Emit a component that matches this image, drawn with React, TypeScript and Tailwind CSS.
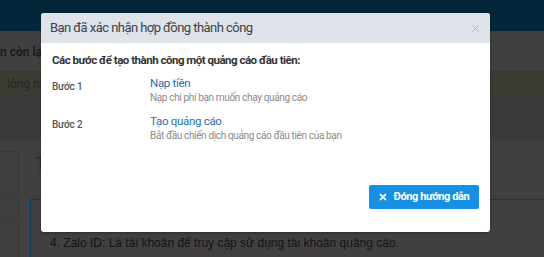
import { FaTimes } from "react-icons/fa";
import { X } from "lucide-react";

const steps = [
  { label: "Bước 1", title: "Nạp tiền", desc: "Nạp chi phí bạn muốn chạy quảng cáo" },
  { label: "Bước 2", title: "Tạo quảng cáo", desc: "Bắt đầu chiến dịch quảng cáo đầu tiên của bạn" },
];

export default function App() {
  return (
    <div className="relative w-[544px] h-[257px] overflow-hidden bg-[#404040] font-['Roboto',sans-serif]">
      {/* page behind the backdrop */}
      <div className="h-[31px] bg-[#04263a]" />
      <div className="h-[40px] flex items-center pt-[2px] text-[12px] font-bold text-[#1a1a1a]">n còn lại:</div>
      <div className="h-[25px] flex items-center pl-[7px] bg-[#3c3b34] border-y border-[#383833] text-[12px] text-[#262626]">
        lòng nạp
      </div>
      <div className="h-[43px] bg-[#3a3a3a]" />
      <div className="flex">
        <div className="w-[19px] h-[120px] mt-[12px] border-r border-t border-[#383838] bg-[#3e3e3e] flex flex-col">
          <div className="h-[41px] border-b border-[#393939]" />
          <div className="h-[31px] border-b border-[#393939]" />
        </div>
        <div className="flex-1 pl-[11px]">
          <div className="h-[60px] pt-[16px] pl-[5px] text-[18px] leading-none text-[#15354d] font-['Liberation_Sans',sans-serif]">
            T
          </div>
          <div className="border-l border-t border-[#0d3a56] h-[80px] pl-[19px] pt-[34px] text-[12px] text-[#141414] font-['Liberation_Sans',sans-serif]">
            4. Zalo ID: Là tài khoản để truy cập sử dụng tài khoản quảng cáo.
          </div>
        </div>
      </div>

      {/* modal */}
      <div className="absolute left-[41px] top-[13px] w-[449px] h-[219px] rounded-[3px] bg-white overflow-hidden shadow-[0_1px_3px_rgba(0,0,0,0.3)] flex flex-col">
        <div className="h-[30px] shrink-0 bg-[#dee2e9] flex items-center justify-between pl-[9px] pr-[9px]">
          <span className="text-[13px] tracking-[-0.55px] text-[#3d4247]">Bạn đã xác nhận hợp đồng thành công</span>
          <X className="w-[11px] h-[11px] text-[#a6aeb6]" strokeWidth={2} />
        </div>
        <div className="flex-1 flex flex-col px-[11px] pt-[10px]">
          <div className="text-[11.5px] tracking-[-0.5px] font-bold text-[#333] leading-[14px]">
            Các bước để tạo thành công một quảng cáo đầu tiên:
          </div>
          <div className="flex flex-col gap-[8px] mt-[8px]">
            {steps.map((s) => (
              <div key={s.label} className="flex">
                <div className="w-[98px] pt-[4px] text-[10px] tracking-[-0.2px] font-medium text-[#555]">{s.label}</div>
                <div className="flex flex-col">
                  <span className="text-[11.5px] tracking-[-0.3px] text-[#1d6fb0] leading-[16px]">{s.title}</span>
                  <span className="text-[10px] tracking-[-0.35px] text-[#8a8a8a] leading-[14px]">{s.desc}</span>
                </div>
              </div>
            ))}
          </div>
          <div className="mt-auto mb-[23px] flex justify-end">
            <button className="w-[110px] h-[24px] rounded-[2px] bg-[#1690e2] text-white text-[11px] tracking-[-0.4px] font-bold flex items-center justify-center gap-[7px]">
              <FaTimes className="w-[8px] h-[10px]" />
              Đóng hướng dẫn
            </button>
          </div>
        </div>
      </div>
    </div>
  );
}
